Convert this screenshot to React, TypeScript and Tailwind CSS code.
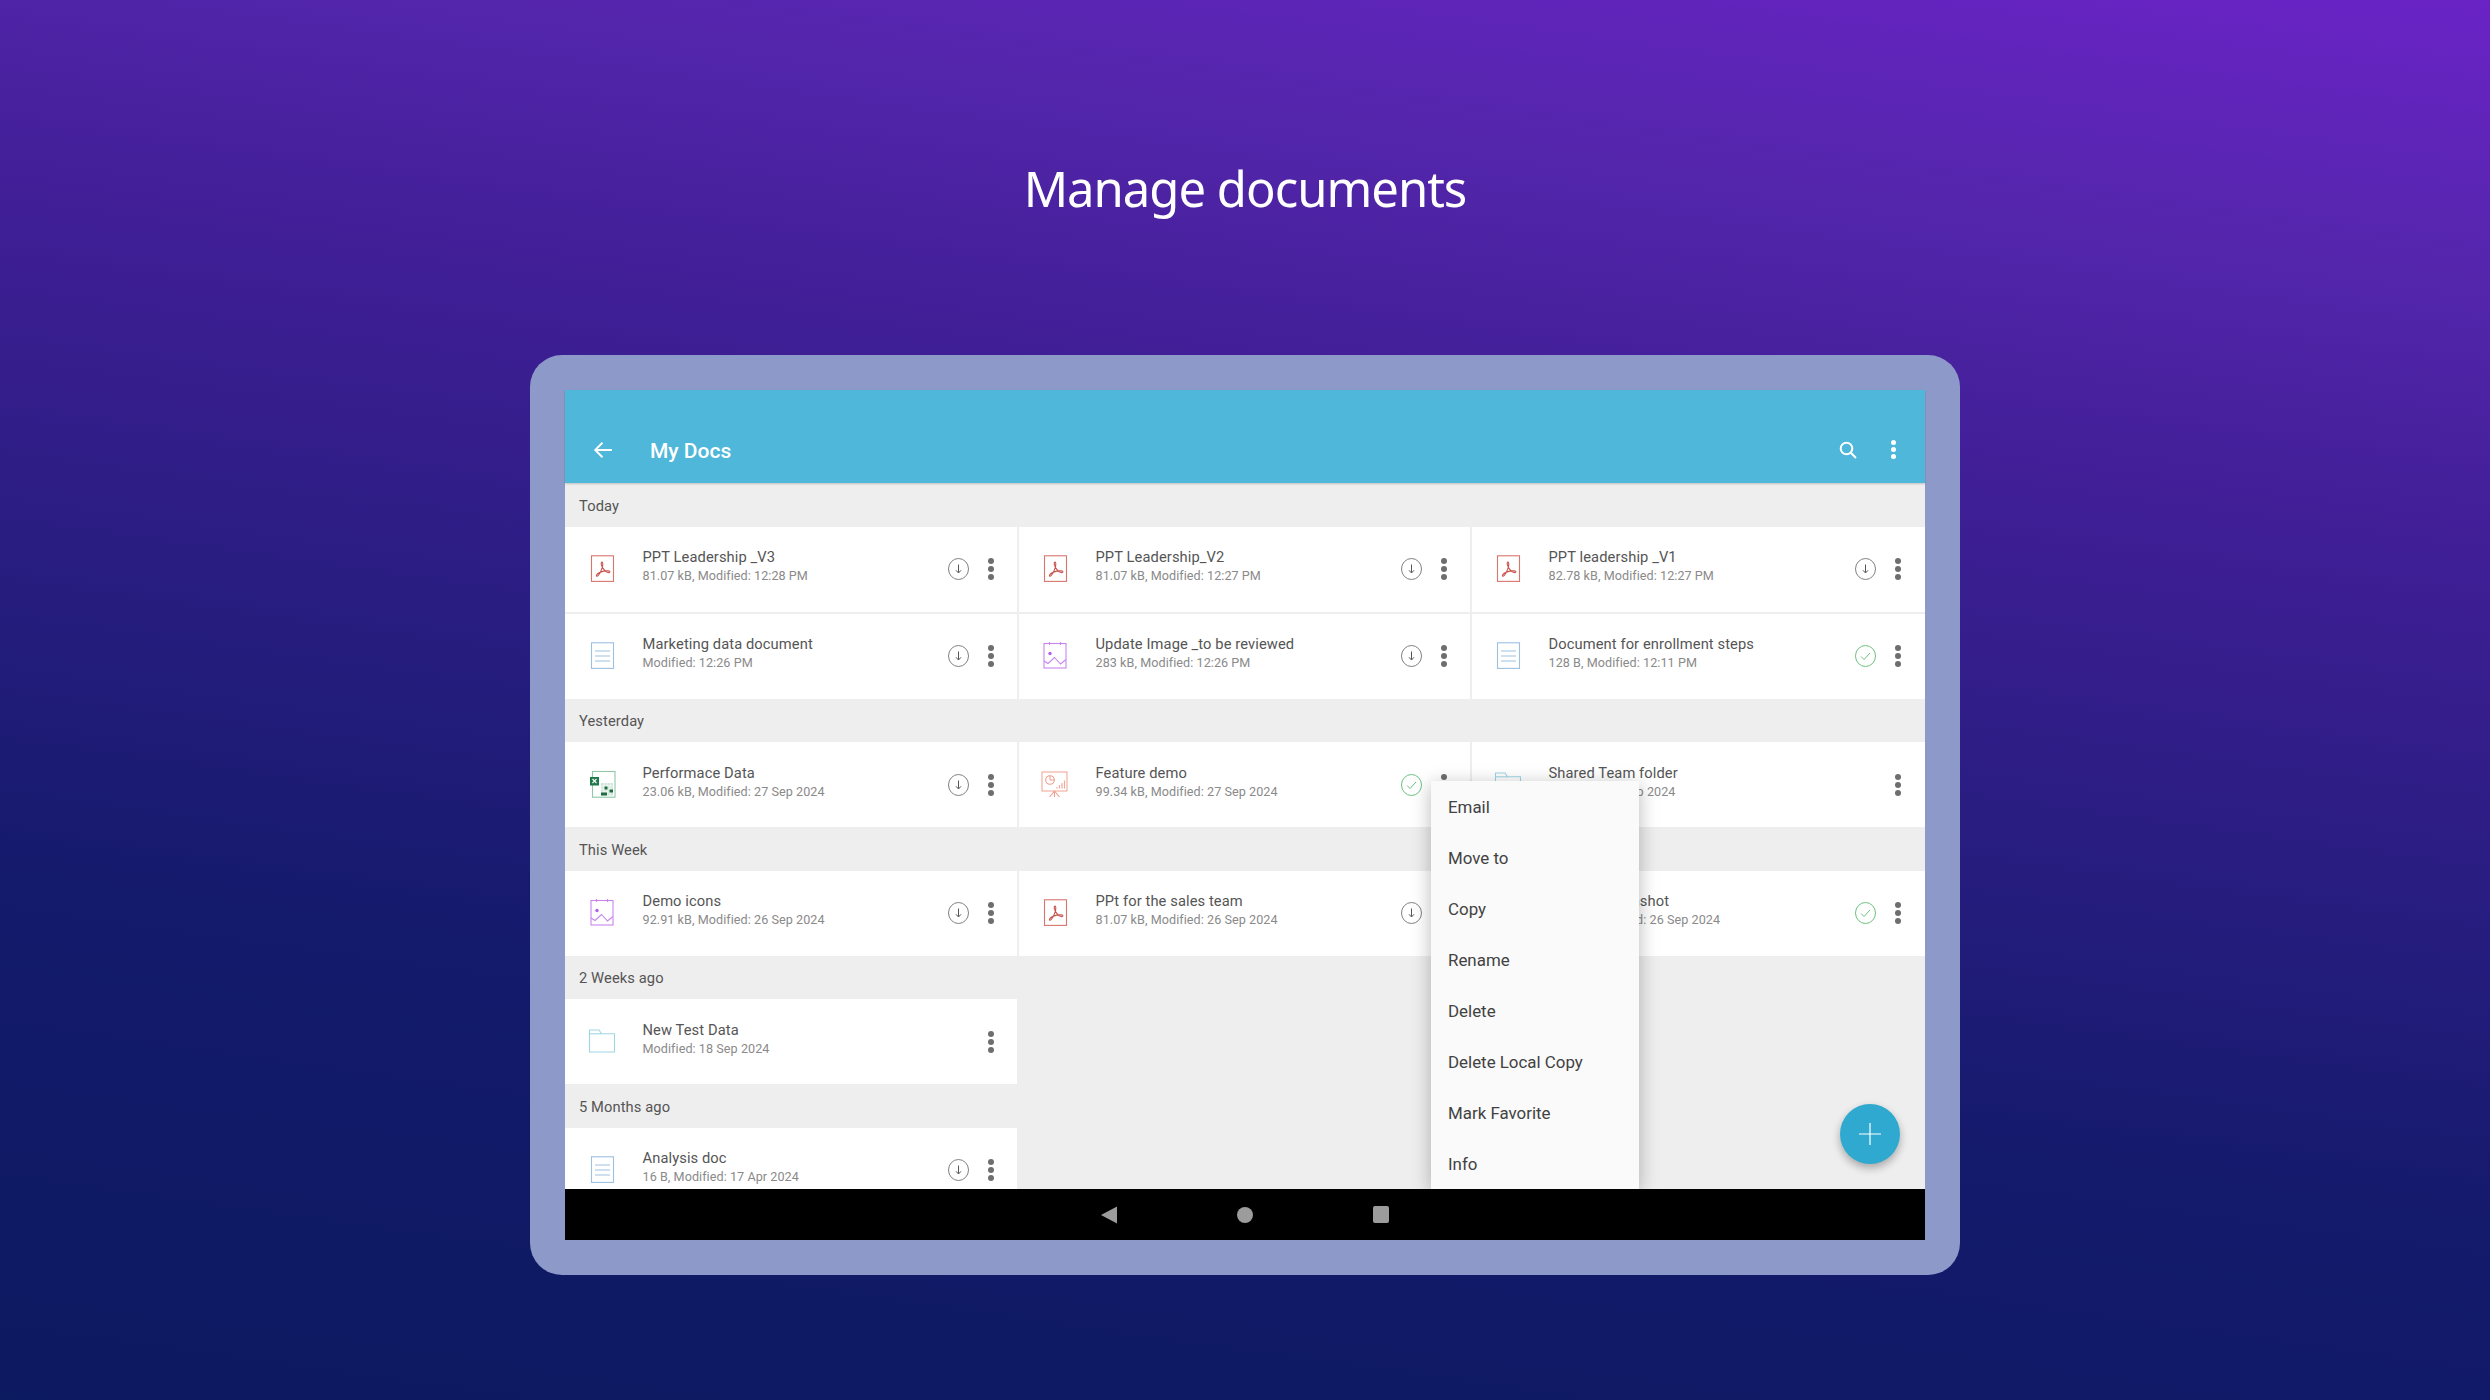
import React from "react";

const Svg = ({ children }: { children: React.ReactNode }) => (
  <svg width="32" height="32" viewBox="0 0 32 32" fill="none" className="block shrink-0">
    {children}
  </svg>
);

const Pdf = () => (
  <Svg>
    <rect x="5.5" y="2.8" width="22" height="25.6" stroke="#d8766e" strokeWidth="1.1" />
    <path
      d="M16 9c-1.400 0-1 3.600 1.800 7.400 2.200 2.900 5 4 6 2.600.8-1.400-3-1.400-6-.9-3 .6-6.200 2.100-7.200 4-.5 1.100.5 1.500 1.500.5 1.600-1.600 3.200-5.200 4.200-8.200.6-2 .8-5.400-.3-5.400z"
      stroke="#c9544e"
      strokeWidth="1.100"
    />
  </Svg>
);

const Doc = () => (
  <Svg>
    <rect x="5.500" y="2.800" width="22" height="25.600" stroke="#9dbfe0" strokeWidth="1.100" />
    <path d="M9 11h15M9 16h15M9 21h15" stroke="#9dbfe0" strokeWidth="1.100" />
  </Svg>
);

const ImageIcon = () => (
  <Svg>
    <rect x="5" y="3.500" width="22" height="24.500" stroke="#c885ee" strokeWidth="1.100" />
    <path d="M10.500 2v3M21.500 2v3" stroke="#c885ee" strokeWidth="1.100" />
    <circle cx="11" cy="13.500" r="1.700" fill="#b45fe6" />
    <path d="M5 21l4 2.500 6.500-6 6 6.500 5.500-4.500" stroke="#c885ee" strokeWidth="1.100" />
  </Svg>
);

const Excel = () => (
  <Svg>
    <rect x="6.500" y="2.500" width="22.500" height="25.700" stroke="#8fc7a8" strokeWidth="1.100" />
    <rect x="4" y="8" width="9" height="8.500" fill="#1f7a4a" />
    <path d="M6.500 10l4 4M10.500 10l-4 4" stroke="#ffffff" strokeWidth="1.100" />
    <rect x="15" y="14" width="12" height="12.500" fill="#cfe6d8" />
    <path d="M18 14v12.500M21 14v12.500M24 14v12.500M15 17h12M15 20h12M15 23h12" stroke="#ffffff" strokeWidth="0.700" />
    <rect x="18.500" y="17.500" width="3" height="3" fill="#1f6b42" />
    <rect x="15" y="23.500" width="6" height="3" fill="#1f6b42" />
    <rect x="23.500" y="20.500" width="3.500" height="3" fill="#1f6b42" />
  </Svg>
);

const Slides = () => (
  <Svg>
    <rect x="3" y="3" width="25" height="19" stroke="#f1a99b" strokeWidth="1.100" />
    <circle cx="11" cy="11" r="4.300" stroke="#ee9c8c" strokeWidth="1.100" />
    <path d="M11 6.700V11h4.300" stroke="#ee9c8c" strokeWidth="1" />
    <path d="M18 19.500v-1.500M20.500 19.500v-3.500M23 19.500v-5.500M25.500 19.500v-8" stroke="#f1a99b" strokeWidth="1.200" />
    <path d="M15.500 22l-5 6M15.500 22l5 6M15.500 22v6" stroke="#ee9c8c" strokeWidth="1.100" />
  </Svg>
);

const Folder = () => (
  <Svg>
    <path d="M3.500 26V4h9.500l2.500 3.800h13V26z" stroke="#9fd6e4" strokeWidth="1.100" />
    <path d="M3.500 7.800h12" stroke="#9fd6e4" strokeWidth="1.100" />
  </Svg>
);

const Download = () => (
  <svg width="21" height="22" viewBox="0 0 21 22" fill="none" className="block shrink-0">
    <ellipse cx="10.500" cy="11" rx="10" ry="10.500" stroke="#808080" strokeWidth="1" />
    <path d="M10.500 6.500v8M8 12.300l2.500 2.700 2.500-2.700" stroke="#555555" strokeWidth="1" />
  </svg>
);

const Check = () => (
  <svg width="21" height="22" viewBox="0 0 21 22" fill="none" className="block shrink-0">
    <ellipse cx="10.500" cy="11" rx="10" ry="10.500" stroke="#6cc17e" strokeWidth="1" />
    <path d="M6 11.500l3 3 6-6.500" stroke="#6cc17e" strokeWidth="1" />
  </svg>
);

const Dots = ({ light = false }: { light?: boolean }) => (
  <div className="flex flex-col gap-[2px] w-[6px] items-center">
    <span className={light ? "w-[5px] h-[5px] rounded-full bg-white" : "w-[6px] h-[6px] rounded-full bg-[#6e6e6e]"} />
    <span className={light ? "w-[5px] h-[5px] rounded-full bg-white" : "w-[6px] h-[6px] rounded-full bg-[#6e6e6e]"} />
    <span className={light ? "w-[5px] h-[5px] rounded-full bg-white" : "w-[6px] h-[6px] rounded-full bg-[#6e6e6e]"} />
  </div>
);

type Kind = "pdf" | "doc" | "img" | "xls" | "ppt" | "dir";
type Item = { kind: Kind; title: string; sub: string; status?: "down" | "ok" };

const icons: Record<Kind, React.ReactNode> = {
  pdf: <Pdf />,
  doc: <Doc />,
  img: <ImageIcon />,
  xls: <Excel />,
  ppt: <Slides />,
  dir: <Folder />,
};

const colPad = ["pl-[21px] pr-[23px]", "pl-[20px] pr-[23px]", "pl-[20px] pr-[24px]"];

const Row = ({ item, col }: { item: Item; col: number }) => (
  <div className={`h-[85px] bg-white flex items-center ${colPad[col]}`}>
    {icons[item.kind]}
    <div className="flex-1 min-w-0 ml-[24.500px] pb-[5px]">
      <div className="text-[14.700px] tracking-[0.1px] leading-[19px] text-[#555555] whitespace-nowrap">{item.title}</div>
      <div className="text-[12.600px] tracking-[0.06px] leading-[18px] text-[#8a8a8a] whitespace-nowrap">{item.sub}</div>
    </div>
    {item.status === "down" && <Download />}
    {item.status === "ok" && <Check />}
    <div className="ml-[19px]">
      <Dots />
    </div>
  </div>
);

const Section = ({ label, items }: { label: string; items: Item[] }) => (
  <div>
    <div className="h-[43.500px] pt-[2px] flex items-center pl-[14px] text-[14.700px] tracking-[0.1px] text-[#555555]">{label}</div>
    <div className="grid grid-cols-[452px_451px_453px] gap-[2px]">
      {items.map((it, i) => (
        <Row key={it.title} item={it} col={i % 3} />
      ))}
    </div>
  </div>
);

const sections: { label: string; items: Item[] }[] = [
  {
    label: "Today",
    items: [
      { kind: "pdf", title: "PPT Leadership _V3", sub: "81.07 kB, Modified: 12:28 PM", status: "down" },
      { kind: "pdf", title: "PPT Leadership_V2", sub: "81.07 kB, Modified: 12:27 PM", status: "down" },
      { kind: "pdf", title: "PPT leadership _V1", sub: "82.78 kB, Modified: 12:27 PM", status: "down" },
      { kind: "doc", title: "Marketing data document", sub: "Modified: 12:26 PM", status: "down" },
      { kind: "img", title: "Update Image _to be reviewed", sub: "283 kB, Modified: 12:26 PM", status: "down" },
      { kind: "doc", title: "Document for enrollment steps", sub: "128 B, Modified: 12:11 PM", status: "ok" },
    ],
  },
  {
    label: "Yesterday",
    items: [
      { kind: "xls", title: "Performace Data", sub: "23.06 kB, Modified: 27 Sep 2024", status: "down" },
      { kind: "ppt", title: "Feature demo", sub: "99.34 kB, Modified: 27 Sep 2024", status: "ok" },
      { kind: "dir", title: "Shared Team folder", sub: "Modified: 27 Sep 2024" },
    ],
  },
  {
    label: "This Week",
    items: [
      { kind: "img", title: "Demo icons", sub: "92.91 kB, Modified: 26 Sep 2024", status: "down" },
      { kind: "pdf", title: "PPt for the sales team", sub: "81.07 kB, Modified: 26 Sep 2024", status: "down" },
      { kind: "img", title: "Demo_Screenshot", sub: "283 kB, Modified: 26 Sep 2024", status: "ok" },
    ],
  },
  {
    label: "2 Weeks ago",
    items: [{ kind: "dir", title: "New Test Data", sub: "Modified: 18 Sep 2024" }],
  },
  {
    label: "5 Months ago",
    items: [{ kind: "doc", title: "Analysis doc", sub: "16 B, Modified: 17 Apr 2024", status: "down" }],
  },
];

const menu = ["Email", "Move to", "Copy", "Rename", "Delete", "Delete Local Copy", "Mark Favorite", "Info"];

export default function App() {
  return (
    <div className="w-full h-[1400px] overflow-hidden flex flex-col items-center bg-[linear-gradient(188deg,#6a23c6_0%,#5426ac_16%,#421f98_30%,#2a1d82_50%,#141a6c_70%,#0c1a60_100%)] font-['Roboto',sans-serif]">
      <h1 className="mt-[158px] h-[60px] leading-[60px] text-[49px] tracking-[-1px] text-white font-['Noto_Sans',sans-serif] font-normal whitespace-nowrap">
        Manage documents
      </h1>
      <div className="mt-[137px] w-[1430px] h-[920px] p-[35px] rounded-[32px] bg-[#8d99c8]">
        <div className="h-full flex flex-col">
          <header className="relative z-10 h-[93px] pt-[47px] bg-[#4fb7d9] shadow-[0_1px_2px_rgba(0,0,0,0.2)] flex items-start pl-[28px] pr-[29px]">
            <div className="h-[25px] flex items-center">
              <svg width="20" height="20" viewBox="0 0 18 18" fill="none" className="block">
                <path d="M17 9H2M8.500 2.500L2 9l6.500 6.500" stroke="#ffffff" strokeWidth="1.700" />
              </svg>
              <div className="ml-[37px] pt-[3px] text-[21px] leading-[25px] font-medium text-white">My Docs</div>
            </div>
            <div className="ml-auto h-[25px] flex items-center">
              <svg width="18" height="18" viewBox="0 0 18 18" fill="none" className="block">
                <circle cx="7.500" cy="7.500" r="5.800" stroke="#ffffff" strokeWidth="2" />
                <path d="M11.800 11.800L17 17" stroke="#ffffff" strokeWidth="2" />
              </svg>
              <div className="ml-[33px]">
                <Dots light />
              </div>
            </div>
          </header>
          <main className="relative flex-1 min-h-0 overflow-hidden bg-[#eeeeee]">
            {sections.map((s) => (
              <Section key={s.label} label={s.label} items={s.items} />
            ))}
            <div className="absolute left-[866px] top-[298px] w-[208px] bg-[#fafafa] shadow-[0_4px_18px_rgba(0,0,0,0.28)]">
              {menu.map((m) => (
                <div key={m} className="h-[51px] pt-[3px] flex items-center pl-[17px] text-[16.900px] text-[#424242]">
                  {m}
                </div>
              ))}
            </div>
            <button className="absolute right-[25px] bottom-[25px] w-[60px] h-[60px] rounded-full bg-[#2fa9cf] shadow-[0_4px_8px_rgba(0,0,0,0.3)] flex items-center justify-center">
              <svg width="22" height="22" viewBox="0 0 22 22" fill="none" className="block">
                <path d="M11 0v22M0 11h22" stroke="#ffffff" strokeWidth="1.200" />
              </svg>
            </button>
          </main>
          <nav className="h-[51px] bg-black flex items-center justify-center gap-[120px]">
            <svg width="16" height="18" viewBox="0 0 16 18" className="block">
              <path d="M16 0.500V17.500L0 9z" fill="#9c9c9c" />
            </svg>
            <span className="w-[16px] h-[16px] rounded-full bg-[#9c9c9c]" />
            <span className="w-[16px] h-[17px] rounded-[2px] bg-[#9c9c9c]" />
          </nav>
        </div>
      </div>
    </div>
  );
}
